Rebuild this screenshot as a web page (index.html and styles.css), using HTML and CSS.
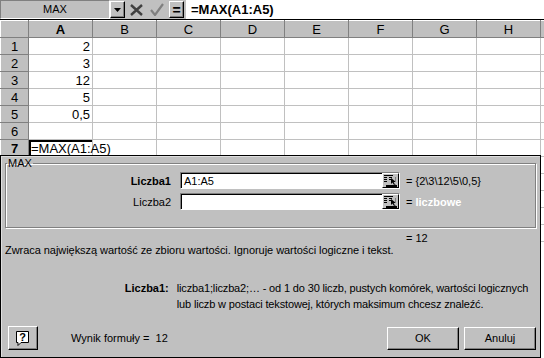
FILE: index.html
```html
<!DOCTYPE html>
<html lang="pl">
	<head>
		<meta charset="UTF-8" />
		<title>MAX</title>
		<link rel="stylesheet" href="styles.css">
	</head>
	<body>
		<!-- formula bar -->
		<div class="toolbar">
			<div class="namebox">MAX</div>
			<div class="tb-btn drop">
				<svg width="7" height="4" viewBox="0 0 7 4"><path d="M0 0h7L3.5 4z" fill="#000"/></svg>
			</div>
			<div class="tb-icon">
				<svg width="13" height="12" viewBox="0 0 13 12"><path d="M1 1l11 10M12 1L1 11" stroke="#404040" stroke-width="2.4" fill="none"/></svg>
			</div>
			<div class="tb-icon">
				<svg width="14" height="13" viewBox="0 0 14 13"><path d="M1 7l4 5L13 1" stroke="#808080" stroke-width="2.2" fill="none"/></svg>
			</div>
			<div class="tb-btn eq">=</div>
			<div class="formula">=MAX(A1:A5)</div>
		</div>

		<!-- worksheet (rows below 7 sit under the palette) -->
		<table class="sheet">
			<colgroup>
				<col class="c-head"><col class="c"><col class="c"><col class="c"><col class="c"><col class="c"><col class="c"><col class="c"><col class="c"><col class="c-rest">
			</colgroup>
			<tr class="heads"><th></th><th class="on">A</th><th>B</th><th>C</th><th>D</th><th>E</th><th>F</th><th>G</th><th>H</th><th></th></tr>
			<tr><th>1</th><td class="num">2</td><td></td><td></td><td></td><td></td><td></td><td></td><td></td><td></td></tr>
			<tr><th>2</th><td class="num">3</td><td></td><td></td><td></td><td></td><td></td><td></td><td></td><td></td></tr>
			<tr><th>3</th><td class="num">12</td><td></td><td></td><td></td><td></td><td></td><td></td><td></td><td></td></tr>
			<tr><th>4</th><td class="num">5</td><td></td><td></td><td></td><td></td><td></td><td></td><td></td><td></td></tr>
			<tr><th>5</th><td class="num">0,5</td><td></td><td></td><td></td><td></td><td></td><td></td><td></td><td></td></tr>
			<tr><th>6</th><td></td><td></td><td></td><td></td><td></td><td></td><td></td><td></td><td></td></tr>
			<tr><th class="on">7</th><td class="active">=MAX(A1:A5)</td><td class="spill"></td><td></td><td></td><td></td><td></td><td></td><td></td><td></td></tr>
			<tr><th></th><td></td><td></td><td></td><td></td><td></td><td></td><td></td><td></td><td></td></tr>
			<tr><th></th><td></td><td></td><td></td><td></td><td></td><td></td><td></td><td></td><td></td></tr>
			<tr><th></th><td></td><td></td><td></td><td></td><td></td><td></td><td></td><td></td><td></td></tr>
			<tr><th></th><td></td><td></td><td></td><td></td><td></td><td></td><td></td><td></td><td></td></tr>
			<tr><th></th><td></td><td></td><td></td><td></td><td></td><td></td><td></td><td></td><td></td></tr>
		</table>

		<!-- function palette -->
		<div class="dialog">
			<fieldset class="group">
				<legend>MAX</legend>
				<div class="arg">
					<span class="arg-name bold">Liczba1</span>
					<div class="field">
						<span class="field-text">A1:A5</span>
						<span class="ref">
							<svg width="15" height="14" viewBox="0 0 15 14">
								<path d="M1 1.5h9M1 3.5h3M6 3.5h3M1 5.5h3M6 5.5h3M1 7.5h3" stroke="#000" stroke-width="1"/>
								<path d="M3 11h11v2H3z" fill="#000"/>
								<path d="M8 4v6l1.5-1.5 1.5 2.5 1-.6-1.4-2.4H13z" fill="#000"/>
								<path d="M12.5 3v5M12.5 10v1" stroke="#808080"/>
							</svg>
						</span>
					</div>
					<span class="arg-val">= {2\3\12\5\0,5}</span>
				</div>
				<div class="arg">
					<span class="arg-name">Liczba2</span>
					<div class="field">
						<span class="field-text"></span>
						<span class="ref">
							<svg width="15" height="14" viewBox="0 0 15 14">
								<path d="M1 1.5h9M1 3.5h3M6 3.5h3M1 5.5h3M6 5.5h3M1 7.5h3" stroke="#000" stroke-width="1"/>
								<path d="M3 11h11v2H3z" fill="#000"/>
								<path d="M8 4v6l1.5-1.5 1.5 2.5 1-.6-1.4-2.4H13z" fill="#000"/>
								<path d="M12.5 3v5M12.5 10v1" stroke="#808080"/>
							</svg>
						</span>
					</div>
					<span class="arg-val">= <b class="hint">liczbowe</b></span>
				</div>
			</fieldset>

			<div class="result">= 12</div>
			<p class="desc">Zwraca największą wartość ze zbioru wartości. Ignoruje wartości logiczne i tekst.</p>

			<div class="argdesc">
				<span class="arg-name bold">Liczba1:</span>
				<p>liczba1;liczba2;… - od 1 do 30 liczb, pustych komórek, wartości logicznych lub liczb w postaci tekstowej, których maksimum chcesz znaleźć.</p>
			</div>

			<div class="footer">
				<button class="btn help">
					<svg width="16" height="17" viewBox="0 0 16 17">
						<path d="M1.5 1.5h12v11H6l-3 3v-3H1.5z" fill="#fff" stroke="#000"/>
						<text x="7.5" y="11" font-size="11" font-weight="bold" text-anchor="middle" font-family="Liberation Sans, Arial, sans-serif">?</text>
					</svg>
				</button>
				<span class="total">Wynik formuły =&nbsp; 12</span>
				<button class="btn ok">OK</button>
				<button class="btn">Anuluj</button>
			</div>
		</div>
	</body>
</html>
```

FILE: styles.css
```css
* {
	box-sizing: border-box;
}

body {
	margin: 0;
	width: 544px;
	height: 358px;
	overflow: hidden;
	position: relative;
	background-color: #fff;
	font-family: "Liberation Sans", Arial, sans-serif;
}

/* formula bar */
.toolbar {
	display: flex;
	align-items: center;
	height: 20px;
	background-color: #c0c0c0;
	border-bottom: 1px solid #000;
}

.namebox {
	width: 110px;
	height: 19px;
	line-height: 17px;
	text-align: center;
	font-size: 11px;
	border: 1px solid;
	border-color: #808080 #fff #fff #808080;
}

.tb-btn {
	display: flex;
	align-items: center;
	justify-content: center;
	height: 17px;
	border: 1px solid;
	border-color: #fff #000 #000 #fff;
	box-shadow: inset -1px -1px #808080;
}

.drop {
	width: 15px;
}

.tb-icon {
	display: flex;
	align-items: center;
	justify-content: center;
	width: 17px;
	height: 17px;
	margin-left: 3px;
}

.tb-icon:first-of-type {
	margin-left: 5px;
}

.eq {
	width: 15px;
	margin-left: 4px;
	font-weight: bold;
	font-size: 14px;
}

.formula {
	flex: 1;
	height: 19px;
	margin-left: 2px;
	padding-left: 5px;
	background-color: #fff;
	font-weight: bold;
	font-size: 13px;
	line-height: 19px;
}

/* worksheet */
.sheet {
	border-collapse: collapse;
	table-layout: fixed;
	width: 560px;
	font-size: 13px;
}

.c-head {
	width: 28px;
}

.c {
	width: 64px;
}

.sheet th,
.sheet td {
	height: 17px;
	padding: 0 2px;
	border: 1px solid #c0c0c0;
	white-space: nowrap;
	overflow: visible;
	line-height: 15px;
}

.sheet th {
	background-color: #c0c0c0;
	font-weight: normal;
	border-color: #fff #808080 #808080 #fff;
}

.sheet th.on {
	font-weight: bold;
}

.num {
	text-align: right;
}

.active {
	box-shadow: inset 2px 2px #000;
	padding-left: 3px;
}

.spill {
	border-left-color: transparent !important;
}

/* function palette */
.dialog {
	position: absolute;
	left: 0;
	top: 155px;
	width: 541px;
	height: 203px;
	padding: 0 4px;
	background-color: #c0c0c0;
	border: 1px solid #000;
	box-shadow: inset 1px 1px #dfdfdf;
	font-size: 11px;
	display: flex;
	flex-direction: column;
}

.dialog > * {
	flex-shrink: 0;
}

.group {
	margin: 1px 0 0;
	height: 71px;
	padding: 2px 0 0;
	border: 1px solid #808080;
	box-shadow: inset 1px 1px #fff, 1px 1px #fff;
}

.group legend {
	padding: 0 1px;
	margin-left: 1px;
	line-height: 13px;
}

.arg {
	display: flex;
	align-items: center;
	height: 17px;
	margin-bottom: 4px;
}

.arg-name {
	width: 165px;
	text-align: right;
}

.bold {
	font-weight: bold;
}

.field {
	display: flex;
	width: 220px;
	height: 17px;
	margin-left: 9px;
	background-color: #fff;
	border: 1px solid;
	border-color: #808080 #fff #fff #808080;
	box-shadow: inset 1px 1px #000;
}

.field-text {
	flex: 1;
	padding: 2px 0 0 3px;
}

.ref {
	display: flex;
	align-items: center;
	justify-content: center;
	width: 17px;
	height: 15px;
	background-color: #c0c0c0;
	border: 1px solid;
	border-color: #fff #000 #000 #fff;
}

.arg-val {
	margin-left: 6px;
}

.hint {
	color: #fff;
}

.result {
	margin-top: 4px;
	padding-left: 401px;
	line-height: 12px;
}

.desc {
	margin: 0;
	line-height: 13px;
	letter-spacing: -0.05px;
}

.argdesc {
	display: flex;
	margin-top: 23px;
	line-height: 16px;
}

.argdesc p {
	margin: 0 0 0 8px;
	width: 362px;
	letter-spacing: -0.15px;
}

.footer {
	display: flex;
	align-items: center;
	margin-top: 14px;
}

.btn {
	height: 23px;
	width: 72px;
	padding: 0;
	background-color: #c0c0c0;
	font-family: inherit;
	font-size: 11px;
	color: #000;
	border: 1px solid;
	border-color: #fff #000 #000 #fff;
	box-shadow: inset -1px -1px #808080;
}

.help {
	display: flex;
	align-items: center;
	justify-content: center;
	width: 30px;
	height: 24px;
	margin-left: 3px;
}

.total {
	margin-left: 33px;
}

.ok {
	margin-left: auto;
	margin-right: 5px;
}
```
